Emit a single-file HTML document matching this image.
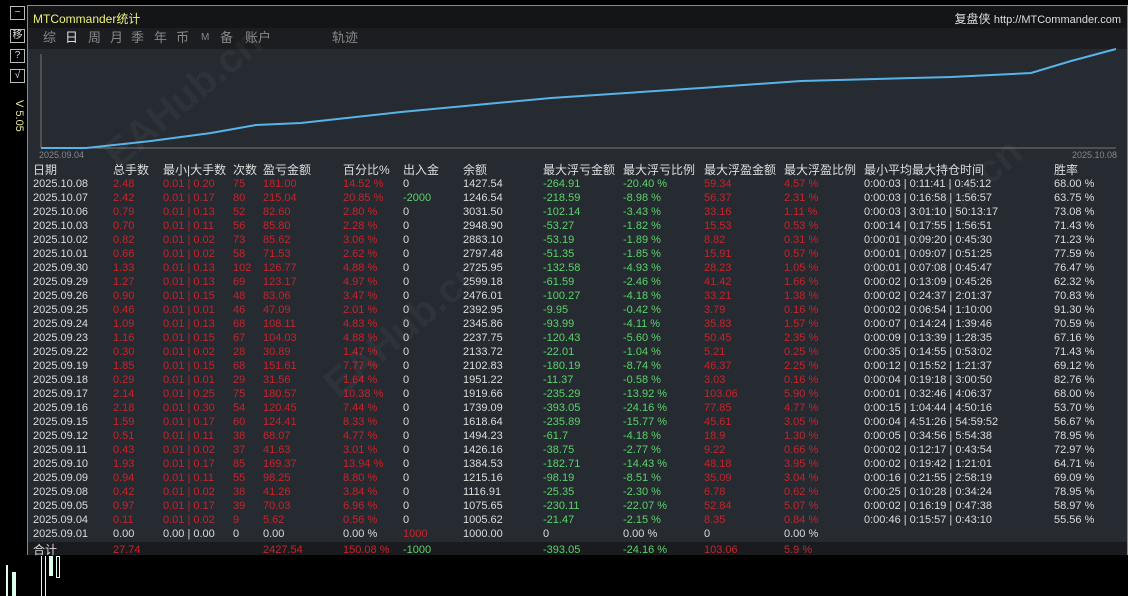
<!DOCTYPE html>
<html><head><meta charset="utf-8"><style>
*{margin:0;padding:0;box-sizing:border-box}
body{width:1128px;height:596px;background:#000;overflow:hidden;position:relative;font-family:"Liberation Sans","Noto Sans CJK SC",sans-serif;font-size:11px;color:#dcdcdc}
.btn{position:absolute;left:10px;width:15px;height:14px;border:1px solid #bbb;color:#ddd;font-size:10px;line-height:12px;text-align:center}
#panel{position:absolute;left:27px;top:5px;width:1101px;height:550px;background:#262a31;border:1px solid #888}
#title{position:absolute;left:0;top:0;width:100%;height:22px;background:#141517}
#tabs{position:absolute;left:0;top:22px;width:100%;height:21px;background:#1b1d21}
.r{position:absolute;white-space:nowrap;height:14px;line-height:14px}
.red{color:#c3262c}.grn{color:#5bd36a}.wh{color:#dcdcdc}
.wm{position:absolute;color:rgba(255,255,255,0.04);font-size:40px;font-weight:bold;transform:rotate(-40deg);white-space:nowrap}
</style></head><body>
<div class="btn" style="top:6px">−</div>
<div class="btn" style="top:29px">移</div>
<div class="btn" style="top:49px">?</div>
<div class="btn" style="top:69px">√</div>
<div style="position:absolute;left:13px;top:100px;color:#e8e8a0;font-size:11px;writing-mode:vertical-rl">V 5.05</div>
<div id="panel">
<div id="title"><span style="position:absolute;left:5px;top:4px;color:#f0f07a;font-size:12px">MTCommander统计</span><span style="position:absolute;right:6px;top:4px;color:#ddd;font-size:12px">复盘侠 <span style="font-size:11px">http://MTCommander.com</span></span></div>
<div id="tabs" style="color:#888;font-size:13px;line-height:20px"><span style="position:absolute;left:15px">综</span><span style="position:absolute;left:37px;color:#ddd">日</span><span style="position:absolute;left:60px">周</span><span style="position:absolute;left:82px">月</span><span style="position:absolute;left:103px">季</span><span style="position:absolute;left:126px">年</span><span style="position:absolute;left:148px">币</span><span style="position:absolute;left:173px;font-size:10px">M</span><span style="position:absolute;left:192px">备</span><span style="position:absolute;left:217px">账户</span><span style="position:absolute;left:304px">轨迹</span></div>
<svg style="position:absolute;left:0;top:38px" width="1101" height="120">
<line x1="13" y1="10" x2="13" y2="104" stroke="#777"/>
<line x1="13" y1="104" x2="1088" y2="104" stroke="#777"/>
<polyline fill="none" stroke="#58b4e8" stroke-width="2" points="13,104 58,104 123,97 183,89 228,81 273,79 373,68 523,54 673,44 773,37 923,33 1003,29 1043,17 1088,5"/>
<text x="11" y="114" fill="#888" font-size="9" font-family="Liberation Sans">2025.09.04</text>
<text x="1044" y="114" fill="#888" font-size="9" font-family="Liberation Sans">2025.10.08</text>
</svg>
<div id="rows"></div>
<div style="position:absolute;left:0;top:536px;width:100%;height:13px;background:#1a1b1e"></div>
<div class="wm" style="left:60px;top:70px">EAHub.cn</div>
<div class="wm" style="left:280px;top:300px">EAHub.cn</div>
<div class="wm" style="left:820px;top:180px">EAHub.cn</div>
</div>
<div style="position:absolute;left:6px;top:565px;width:2px;height:31px;background:#dfe"></div>
<div style="position:absolute;left:12px;top:572px;width:4px;height:24px;background:#dfe"></div>
<div style="position:absolute;left:41px;top:556px;width:1px;height:40px;background:#dfe"></div>
<div style="position:absolute;left:45px;top:556px;width:1px;height:40px;background:#dfe"></div>
<div style="position:absolute;left:49px;top:556px;width:4px;height:20px;background:#dfe"></div>
<div style="position:absolute;left:56px;top:556px;width:4px;height:22px;border:1px solid #dfe"></div>
<script>
var X=[5,85,135,205,235,315,375,435,515,595,676,756,836,1026];
var H=["日期","总手数","最小|大手数","次数","盈亏金额","百分比%","出入金","余额","最大浮亏金额","最大浮亏比例","最大浮盈金额","最大浮盈比例","最小平均最大持仓时间","胜率"];
var D=`2025.10.08,2.48,0.01 | 0.20,75,181.00,14.52 %,0,1427.54,-264.91,-20.40 %,59.34,4.57 %,0:00:03 | 0:11:41 | 0:45:12,68.00 %
2025.10.07,2.42,0.01 | 0.17,80,215.04,20.85 %,-2000,1246.54,-218.59,-8.98 %,56.37,2.31 %,0:00:03 | 0:16:58 | 1:56:57,63.75 %
2025.10.06,0.79,0.01 | 0.13,52,82.60,2.80 %,0,3031.50,-102.14,-3.43 %,33.16,1.11 %,0:00:03 | 3:01:10 | 50:13:17,73.08 %
2025.10.03,0.70,0.01 | 0.11,56,85.80,2.28 %,0,2948.90,-53.27,-1.82 %,15.53,0.53 %,0:00:14 | 0:17:55 | 1:56:51,71.43 %
2025.10.02,0.82,0.01 | 0.02,73,85.62,3.06 %,0,2883.10,-53.19,-1.89 %,8.82,0.31 %,0:00:01 | 0:09:20 | 0:45:30,71.23 %
2025.10.01,0.66,0.01 | 0.02,58,71.53,2.62 %,0,2797.48,-51.35,-1.85 %,15.91,0.57 %,0:00:01 | 0:09:07 | 0:51:25,77.59 %
2025.09.30,1.33,0.01 | 0.13,102,126.77,4.88 %,0,2725.95,-132.58,-4.93 %,28.23,1.05 %,0:00:01 | 0:07:08 | 0:45:47,76.47 %
2025.09.29,1.27,0.01 | 0.13,69,123.17,4.97 %,0,2599.18,-61.59,-2.46 %,41.42,1.66 %,0:00:02 | 0:13:09 | 0:45:26,62.32 %
2025.09.26,0.90,0.01 | 0.15,48,83.06,3.47 %,0,2476.01,-100.27,-4.18 %,33.21,1.38 %,0:00:02 | 0:24:37 | 2:01:37,70.83 %
2025.09.25,0.46,0.01 | 0.01,46,47.09,2.01 %,0,2392.95,-9.95,-0.42 %,3.79,0.16 %,0:00:02 | 0:06:54 | 1:10:00,91.30 %
2025.09.24,1.09,0.01 | 0.13,68,108.11,4.83 %,0,2345.86,-93.99,-4.11 %,35.83,1.57 %,0:00:07 | 0:14:24 | 1:39:46,70.59 %
2025.09.23,1.16,0.01 | 0.15,67,104.03,4.88 %,0,2237.75,-120.43,-5.60 %,50.45,2.35 %,0:00:09 | 0:13:39 | 1:28:35,67.16 %
2025.09.22,0.30,0.01 | 0.02,28,30.89,1.47 %,0,2133.72,-22.01,-1.04 %,5.21,0.25 %,0:00:35 | 0:14:55 | 0:53:02,71.43 %
2025.09.19,1.85,0.01 | 0.15,68,151.61,7.77 %,0,2102.83,-180.19,-8.74 %,46.37,2.25 %,0:00:12 | 0:15:52 | 1:21:37,69.12 %
2025.09.18,0.29,0.01 | 0.01,29,31.56,1.64 %,0,1951.22,-11.37,-0.58 %,3.03,0.16 %,0:00:04 | 0:19:18 | 3:00:50,82.76 %
2025.09.17,2.14,0.01 | 0.25,75,180.57,10.38 %,0,1919.66,-235.29,-13.92 %,103.06,5.90 %,0:00:01 | 0:32:46 | 4:06:37,68.00 %
2025.09.16,2.18,0.01 | 0.30,54,120.45,7.44 %,0,1739.09,-393.05,-24.16 %,77.85,4.77 %,0:00:15 | 1:04:44 | 4:50:16,53.70 %
2025.09.15,1.59,0.01 | 0.17,60,124.41,8.33 %,0,1618.64,-235.89,-15.77 %,45.61,3.05 %,0:00:04 | 4:51:26 | 54:59:52,56.67 %
2025.09.12,0.51,0.01 | 0.11,38,68.07,4.77 %,0,1494.23,-61.7,-4.18 %,18.9,1.30 %,0:00:05 | 0:34:56 | 5:54:38,78.95 %
2025.09.11,0.43,0.01 | 0.02,37,41.63,3.01 %,0,1426.16,-38.75,-2.77 %,9.22,0.66 %,0:00:02 | 0:12:17 | 0:43:54,72.97 %
2025.09.10,1.93,0.01 | 0.17,85,169.37,13.94 %,0,1384.53,-182.71,-14.43 %,48.18,3.95 %,0:00:02 | 0:19:42 | 1:21:01,64.71 %
2025.09.09,0.94,0.01 | 0.11,55,98.25,8.80 %,0,1215.16,-98.19,-8.51 %,35.09,3.04 %,0:00:16 | 0:21:55 | 2:58:19,69.09 %
2025.09.08,0.42,0.01 | 0.02,38,41.26,3.84 %,0,1116.91,-25.35,-2.30 %,6.78,0.62 %,0:00:25 | 0:10:28 | 0:34:24,78.95 %
2025.09.05,0.97,0.01 | 0.17,39,70.03,6.96 %,0,1075.65,-230.11,-22.07 %,52.84,5.07 %,0:00:02 | 0:16:19 | 0:47:38,58.97 %
2025.09.04,0.11,0.01 | 0.02,9,5.62,0.56 %,0,1005.62,-21.47,-2.15 %,8.35,0.84 %,0:00:46 | 0:15:57 | 0:43:10,55.56 %
2025.09.01,0.00,0.00 | 0.00,0,0.00,0.00 %,1000,1000.00,0,0.00 %,0,0.00 %,,`.split("\n");
var C=["wh","red","red","red","red","red","wh","wh","grn","grn","red","red","wh","wh"];
var h="";
H.forEach(function(t,i){h+='<div class="r" style="left:'+X[i]+'px;top:157px;font-size:12px;color:#ddd">'+t+'</div>';});
D.forEach(function(l,j){var c=l.split(",");var y=171+j*14;c.forEach(function(t,i){var cl=C[i];if(j==25){cl=(i==6)?"red":"wh";}if(i==6&&t=="-2000")cl="grn";h+='<div class="r '+cl+'" style="left:'+X[i]+'px;top:'+y+'px">'+t+'</div>';});});
var T=[["合计",0,"wh"],["27.74",1,"red"],["2427.54",4,"red"],["150.08 %",5,"red"],["-1000",6,"grn"],["-393.05",8,"grn"],["-24.16 %",9,"grn"],["103.06",10,"red"],["5.9 %",11,"red"]];
T.forEach(function(t){h+='<div class="r '+t[2]+'" style="left:'+X[t[1]]+'px;top:537px;z-index:2'+(t[1]==0?';font-size:12px':'')+'">'+t[0]+'</div>';});
document.getElementById("rows").innerHTML=h;
</script>
</body></html>
